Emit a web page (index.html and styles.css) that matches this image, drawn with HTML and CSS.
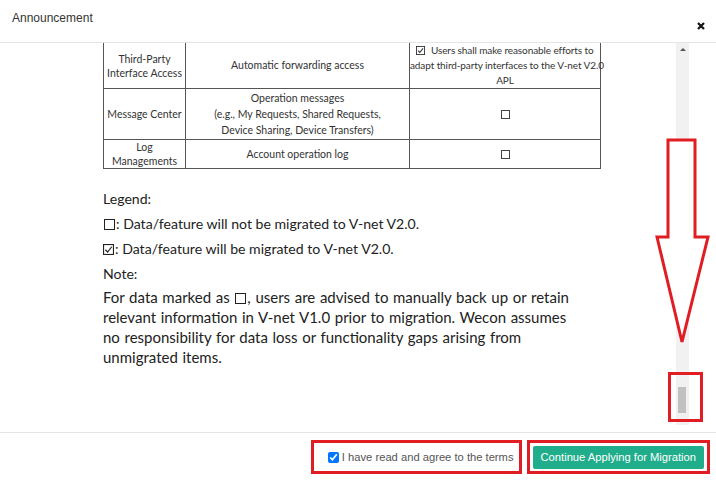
FILE: index.html
```html
<!DOCTYPE html>
<html lang="en">
<head>
    <meta charset="UTF-8">
    <title>Announcement</title>
    <link rel="stylesheet" href="styles.css">
</head>
<body>
    <div class="dialog">
        <div class="dialog-header">
            <div class="dialog-title">Announcement</div>
            <button type="button" class="close-btn" aria-label="Close">
                <svg width="8" height="8" viewBox="0 0 8 8"><path d="M1 1L7 7M7 1L1 7" stroke="#111" stroke-width="2.2"/></svg>
            </button>
        </div>
        <div class="dialog-body">
            <div class="doc">
                <table class="doc-table">
                    <colgroup>
                        <col class="col-name">
                        <col class="col-desc">
                        <col class="col-mig">
                    </colgroup>
                    <tr class="row-first">
                        <td class="cell-tight">Third-Party<br>Interface Access</td>
                        <td>Automatic forwarding access</td>
                        <td class="cell-mig"><span class="tick small"><svg viewBox="0 0 10 10"><rect x="0.5" y="0.5" width="9" height="9" fill="none" stroke="#333"/><path d="M2.3 5.2L4.2 7.2L7.8 2.6" fill="none" stroke="#333" stroke-width="1.2"/></svg></span> Users shall make reasonable efforts to<br>adapt third-party interfaces to the V-net V2.0<br>APL</td>
                    </tr>
                    <tr class="row-second">
                        <td>Message Center</td>
                        <td>Operation messages<br>(e.g., My Requests, Shared Requests,<br>Device Sharing, Device Transfers)</td>
                        <td><span class="box small"></span></td>
                    </tr>
                    <tr class="row-third">
                        <td class="cell-tight">Log<br>Managements</td>
                        <td>Account operation log</td>
                        <td><span class="box small"></span></td>
                    </tr>
                </table>
                <div class="legend">
                    <p>Legend:</p>
                    <p><span class="box"></span>: Data/feature will not be migrated to V-net V2.0.</p>
                    <p><span class="tick"><svg viewBox="0 0 10 10"><rect x="0.5" y="0.5" width="9" height="9" fill="none" stroke="#222"/><path d="M2.2 5.2L4.2 7.3L7.9 2.5" fill="none" stroke="#222" stroke-width="1.1"/></svg></span>: Data/feature will be migrated to V-net V2.0.</p>
                    <p>Note:</p>
                </div>
                <p class="note">For data marked as <span class="box"></span>, users are advised to manually back up or retain relevant information in V-net V1.0 prior to migration. Wecon assumes no responsibility for data loss or functionality gaps arising from unmigrated items.</p>
            </div>
            <div class="scrollbar">
                <span class="scroll-up"></span>
                <span class="scroll-thumb"></span>
            </div>
        </div>
        <div class="dialog-footer">
            <label class="agree">
                <input type="checkbox" checked>
                I have read and agree to the terms
            </label>
            <button type="button" class="btn-continue">Continue Applying for Migration</button>
        </div>

        <!-- red annotations drawn over the screenshot -->
        <svg class="mark-arrow" width="56" height="208" viewBox="0 0 56 208">
            <path d="M13 2H40V99H53L27 204L2 99H13Z" fill="#fff" stroke="#e11d24" stroke-width="3" stroke-linejoin="miter"/>
        </svg>
        <div class="mark mark-thumb"></div>
        <div class="mark mark-agree"></div>
        <div class="mark mark-continue"></div>
    </div>
</body>
</html>
```

FILE: styles.css
```css
body {
    margin: 0;
    background: #fff;
    font-family: "Liberation Sans", Arial, sans-serif;
    color: #333;
}
.dialog {
    position: relative;
    height: 100vh;
    display: flex;
    flex-direction: column;
}
.dialog-header {
    height: 42px;
    flex-shrink: 0;
    border-bottom: 1px solid #e5e5e5;
    display: flex;
    justify-content: space-between;
    padding: 0 11px 0 12px;
}
.dialog-title {
    padding-top: 11px;
    font-size: 12px;
    line-height: 14px;
    color: #333;
}
.close-btn {
    border: none;
    background: none;
    padding: 0;
    margin-top: 22px;
    width: 8px;
    height: 8px;
    display: flex;
    cursor: pointer;
}
.dialog-body {
    flex: 1;
    min-height: 0;
    display: flex;
    overflow: hidden;
}
.doc {
    flex: 1;
    padding-left: 103px;
    overflow: hidden;
    font-family: Lato, "Open Sans", sans-serif;
    color: #222;
}
.doc-table {
    border-collapse: collapse;
    width: 497px;
    table-layout: fixed;
    font-size: 10.5px;
    line-height: 15px;
    color: #333;
}
.col-name { width: 82px; }
.col-desc { width: 224px; }
.col-mig { width: 191px; }
.doc-table td {
    border: 1px solid #555;
    text-align: center;
    vertical-align: middle;
    padding: 0 1px;
}
.doc-table .cell-tight {
    line-height: 14px;
}
.doc-table .cell-mig {
    padding: 0;
    font-size: 10px;
    letter-spacing: -0.1px;
    white-space: nowrap;
}
.row-first td {
    border-top: none;
    height: 44px;
}
.row-second td {
    height: 50px;
    line-height: 16px;
}
.row-third td { height: 28px; }
.box {
    display: inline-block;
    width: 11px;
    height: 11px;
    border: 1px solid #222;
    box-sizing: border-box;
    vertical-align: -1px;
    margin: 0 1px;
}
.box.small {
    width: 9px;
    height: 9px;
    border-color: #444;
    margin: 0;
}
.tick {
    display: inline-block;
    width: 11px;
    height: 11px;
    vertical-align: -1px;
    margin-right: 1px;
}
.tick svg {
    width: 100%;
    height: 100%;
    display: block;
}
.tick.small {
    width: 9px;
    height: 9px;
    margin-right: 3px;
}
.legend {
    margin-top: 17px;
    font-size: 14.1px;
}
.legend p {
    margin: 0;
    line-height: 25px;
}
.note {
    margin: 1px 0 0;
    width: 476px;
    font-size: 15px;
    word-spacing: 0.8px;
    line-height: 20px;
}
.scrollbar {
    position: relative;
    width: 13px;
    margin: 0 27px 7px 0;
    background: #f1f1f1;
}
.scroll-up {
    position: absolute;
    left: 4px;
    top: 5px;
    border-left: 3px solid transparent;
    border-right: 3px solid transparent;
    border-bottom: 3px solid #555;
}
.scroll-thumb {
    position: absolute;
    left: 2px;
    top: 344px;
    width: 8px;
    height: 26px;
    background: #c1c1c1;
}
.dialog-footer {
    height: 48px;
    flex-shrink: 0;
    border-top: 1px solid #e5e5e5;
    display: flex;
    align-items: center;
    justify-content: flex-end;
    gap: 19px;
    padding-right: 12px;
}
.agree {
    display: flex;
    align-items: center;
    font-size: 11.2px;
    color: #555;
}
.agree input {
    margin: 0 3px 0 0;
    width: 11px;
    height: 11px;
}
.btn-continue {
    height: 23px;
    padding: 0 8px;
    border: none;
    border-radius: 2px;
    background: #20ad8b;
    color: #fff;
    font-family: "Liberation Sans", Arial, sans-serif;
    font-size: 11.2px;
    cursor: pointer;
}
.mark-arrow {
    position: absolute;
    left: 655px;
    top: 138px;
}
.mark {
    position: absolute;
    border: 3px solid #e11d24;
    box-sizing: border-box;
}
.mark-thumb {
    left: 668px;
    top: 372px;
    width: 35px;
    height: 50px;
}
.mark-agree {
    left: 311px;
    top: 440px;
    width: 211px;
    height: 34px;
}
.mark-continue {
    left: 527px;
    top: 440px;
    width: 183px;
    height: 34px;
}
```
